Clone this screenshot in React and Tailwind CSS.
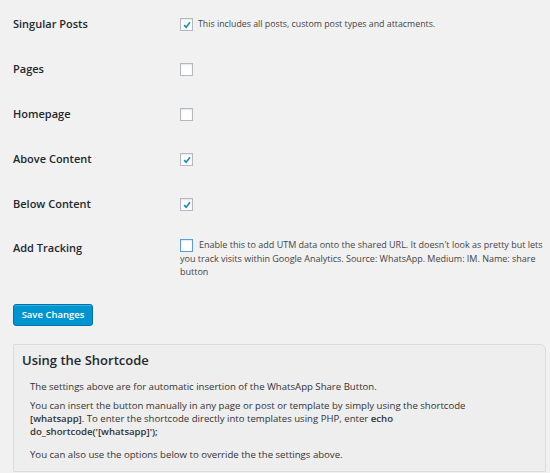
import React from 'react';

function Check({ checked, focus }) {
  return (
    <span
      className={`inline-flex h-[13px] w-[13px] shrink-0 items-center justify-center bg-white align-middle border ${
        focus ? 'border-[#5b9dd9] shadow-[0_0_2px_rgba(30,140,190,0.8)]' : 'border-[#b4b9be]'
      } shadow-[inset_0_1px_2px_rgba(0,0,0,0.1)]`}
    >
      {checked && (
        <svg viewBox="0 0 12 12" className="h-[10px] w-[10px]">
          <path d="M2.5 6.2 L5 8.6 L9.6 2.8" fill="none" stroke="#1e8cbe" strokeWidth="2" />
        </svg>
      )}
    </span>
  );
}

const rows = [
  { label: 'Singular Posts', checked: true, note: 'This includes all posts, custom post types and attacments.' },
  { label: 'Pages', checked: false },
  { label: 'Homepage', checked: false },
  { label: 'Above Content', checked: true },
  { label: 'Below Content', checked: true },
];

export default function App() {
  return (
    <div className="min-h-[473px] w-[550px] overflow-hidden bg-[#f1f1f1] text-[#444] font-['Open_Sans',sans-serif]">
      <div className="pl-[13px] pt-[2px]">
        {rows.map((r) => (
          <div key={r.label} className="flex h-[45px] items-center">
            <div className="w-[167px] text-[11px] font-semibold text-[#23282d]">{r.label}</div>
            <div className="flex items-center gap-[5px]">
              <Check checked={r.checked} />
              {r.note && <span className="text-[8.8px] text-[#444]">{r.note}</span>}
            </div>
          </div>
        ))}
        <div className="flex items-start pt-[11px]">
          <div className="w-[167px] pt-[2px] text-[11px] font-semibold text-[#23282d]">Add Tracking</div>
          <div className="w-[366px] text-[9px] leading-[13px] text-[#444]">
            <Check focus />
            <span className="ml-[6px]">
              Enable this to add UTM data onto the shared URL. It doesn't look as pretty but lets you track visits
              within Google Analytics. Source: WhatsApp. Medium: IM. Name: share button
            </span>
          </div>
        </div>

        <button className="mt-[26px] h-[22px] w-[80px] rounded-[3px] border border-[#0073aa] bg-[#0095d0] text-[9.5px] font-semibold text-white shadow-[inset_0_1px_0_rgba(120,200,230,0.5)]">
          Save Changes
        </button>

        <div className="mt-[18px] mr-[4px] rounded-tr-[6px] border border-[#dcdcdc] bg-[#eeeeee] pb-[10px] pl-[8px] pt-[6px]">
          <h3 className="text-[13px] font-semibold text-[#23282d]">Using the Shortcode</h3>
          <div className="mt-[9px] pl-[8px] pr-[40px] text-[9.6px] leading-[13px] text-[#333]">
            <p className="mb-[6px]">The settings above are for automatic insertion of the WhatsApp Share Button.</p>
            <p className="mb-[10px]">
              You can insert the button manually in any page or post or template by simply using the shortcode{' '}
              <strong className="font-semibold">[whatsapp]</strong>. To enter the shortcode directly into templates
              using PHP, enter <strong className="font-semibold">echo do_shortcode('[whatsapp]');</strong>
            </p>
            <p>You can also use the options below to override the the settings above.</p>
          </div>
        </div>
      </div>
    </div>
  );
}
